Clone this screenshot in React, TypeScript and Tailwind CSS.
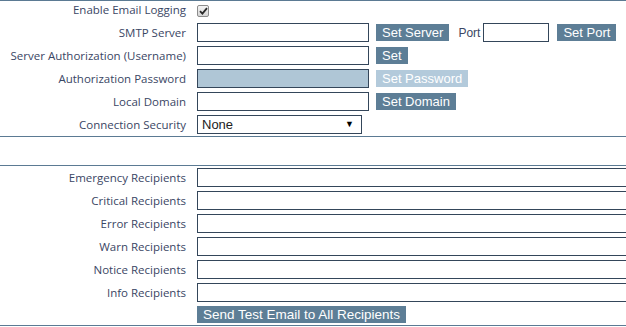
import React from "react";

const labelFont = { fontFamily: '"Open Sans", "Noto Sans", sans-serif' };
const btnFont = { fontFamily: '"Liberation Sans", Arial, sans-serif' };

function Label({ children }: { children: React.ReactNode }) {
  return (
    <div
      className="w-[186px] shrink-0 text-right text-[11.5px] leading-none text-[#3a4664]"
      style={labelFont}
    >
      {children}
    </div>
  );
}

function TextBox({ className = "", disabled = false }: { className?: string; disabled?: boolean }) {
  return (
    <div
      className={`h-[19px] shrink-0 border border-[#34465a] ${disabled ? "bg-[#afc6d6]" : "bg-white"} ${className}`}
    />
  );
}

function Btn({
  children,
  disabled = false,
  className = "text-[13px]",
}: {
  children: React.ReactNode;
  disabled?: boolean;
  className?: string;
}) {
  return (
    <div
      className={`h-[17px] shrink-0 px-[6px] leading-[17px] text-white whitespace-nowrap ${
        disabled ? "bg-[#b3cadb]" : "bg-[#5d7e96]"
      } ${className}`}
      style={btnFont}
    >
      {children}
    </div>
  );
}

function Row({ label, children }: { label: string; children: React.ReactNode }) {
  return (
    <div className="flex h-[19px] items-center">
      <Label>{label}</Label>
      <div className="ml-[11px] flex items-center">{children}</div>
    </div>
  );
}

const recipients = [
  "Emergency Recipients",
  "Critical Recipients",
  "Error Recipients",
  "Warn Recipients",
  "Notice Recipients",
  "Info Recipients",
];

export default function App() {
  return (
    <div className="w-[626px] h-[327px] overflow-hidden bg-white">
      {/* server settings */}
      <div className="flex flex-col gap-[4px] border-t border-b border-[#5b7a93] pb-[2px]">
        <div className="flex h-[18px] items-center">
          <Label>Enable Email Logging</Label>
          <div className="ml-[11px] mt-[2px] flex h-[12px] w-[12px] items-center justify-center rounded-[2px] border border-[#8c8c8c] bg-gradient-to-b from-[#f4f4f4] to-[#d6d6d6]">
            <svg width="9" height="8" viewBox="0 0 9 8">
              <path d="M1 4.2 L3.4 6.6 L8 1.2" fill="none" stroke="#2a2a2a" strokeWidth="1.8" />
            </svg>
          </div>
        </div>

        <Row label="SMTP Server">
          <TextBox className="w-[172px]" />
          <div className="ml-[7px]">
            <Btn>Set Server</Btn>
          </div>
          <span className="ml-[9px] text-[12px] text-[#3b4763]" style={btnFont}>
            Port
          </span>
          <TextBox className="ml-[3px] w-[66px]" />
          <div className="ml-[8px]">
            <Btn>Set Port</Btn>
          </div>
        </Row>

        <Row label="Server Authorization (Username)">
          <TextBox className="w-[172px]" />
          <div className="ml-[7px]">
            <Btn>Set</Btn>
          </div>
        </Row>

        <Row label="Authorization Password">
          <TextBox className="w-[172px]" disabled />
          <div className="ml-[7px]">
            <Btn disabled>Set Password</Btn>
          </div>
        </Row>

        <Row label="Local Domain">
          <TextBox className="w-[172px]" />
          <div className="ml-[7px]">
            <Btn>Set Domain</Btn>
          </div>
        </Row>

        <Row label="Connection Security">
          <div
            className="flex h-[19px] w-[165px] items-center justify-between border border-[#34465a] bg-white pl-[4px] pr-[7px] text-[13px] text-[#222]"
            style={btnFont}
          >
            <span>None</span>
            <span className="text-[9px] text-black">▼</span>
          </div>
        </Row>
      </div>

      <div className="h-[28px]" />

      {/* recipients */}
      <div className="flex flex-col gap-[4px] border-t border-b border-[#5b7a93] pt-[2px] pb-[2px]">
        {recipients.map((r) => (
          <Row key={r} label={r}>
            <TextBox className="w-[440px]" />
          </Row>
        ))}
        <div className="ml-[197px] flex">
          <Btn className="text-[13.5px]">Send Test Email to All Recipients</Btn>
        </div>
      </div>
    </div>
  );
}
